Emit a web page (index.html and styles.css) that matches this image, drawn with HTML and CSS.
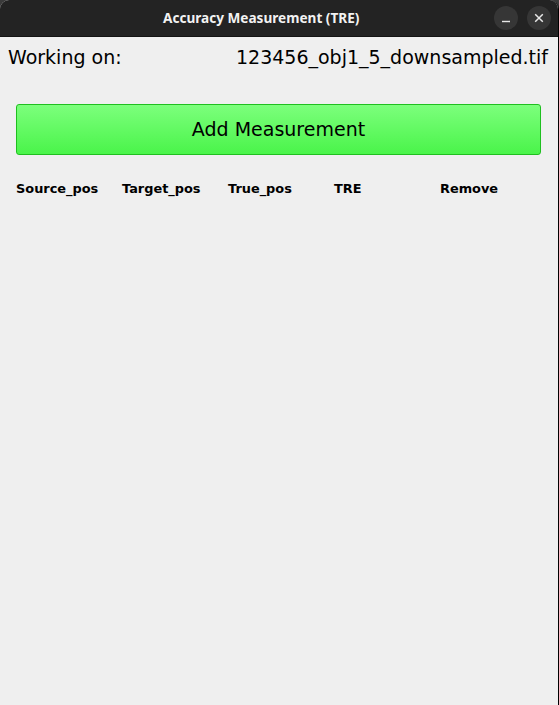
FILE: index.html
```html
<!DOCTYPE html>
<html>
<head>
<meta charset="utf-8">
<link rel="stylesheet" href="styles.css">
</head>
<body>
<div class="window">
  <div class="titlebar">
    <span class="title">Accuracy Measurement (TRE)</span>
    <div class="controls">
      <span class="ctl">
        <svg width="10" height="10" viewBox="0 0 10 10"><path d="M1 8.5h8" stroke="#e8e8e8" stroke-width="1.4"/></svg>
      </span>
      <span class="ctl">
        <svg width="10" height="10" viewBox="0 0 10 10"><path d="M1.2 1.2l7.6 7.6M8.8 1.2l-7.6 7.6" stroke="#e8e8e8" stroke-width="1.5"/></svg>
      </span>
    </div>
  </div>
  <div class="content">
    <div class="working">
      <span>Working on:</span>
      <span>123456_obj1_5_downsampled.tif</span>
    </div>
    <button class="add">Add Measurement</button>
    <div class="header">
      <span>Source_pos</span>
      <span>Target_pos</span>
      <span>True_pos</span>
      <span>TRE</span>
      <span>Remove</span>
    </div>
  </div>
</div>
</body>
</html>
```
FILE: styles.css
```css
html, body {
  margin: 0;
  padding: 0;
  height: 100%;
  background: #3a3a3a;
}
.window {
  width: 558px;
  height: 705px;
  border-right: 1px solid #000;
  display: flex;
  flex-direction: column;
  background: #efefef;
  border-radius: 9px 9px 0 0;
  overflow: hidden;
}
.titlebar {
  height: 36px;
  flex: none;
  background: #232323;
  border-bottom: 1px solid #141414;
  display: flex;
  align-items: center;
  position: relative;
}
.title {
  font-family: "Noto Sans", sans-serif;
  font-weight: bold;
  font-size: 13.6px;
  color: #f2f2f2;
  margin-left: 163px;
  padding-bottom: 1px;
}
.controls {
  position: absolute;
  right: 7px;
  top: 6px;
  display: flex;
  gap: 9px;
}
.ctl {
  width: 24px;
  height: 24px;
  border-radius: 50%;
  background: #363636;
  display: flex;
  align-items: center;
  justify-content: center;
}
.content {
  flex: 1;
  font-family: "DejaVu Sans", sans-serif;
  color: #000;
  padding: 0 10px 0 8px;
}
.working {
  display: flex;
  justify-content: space-between;
  font-size: 19px;
  line-height: 22px;
  padding-top: 9px;
}
.add {
  display: block;
  box-sizing: border-box;
  margin: 36px 8px 0 8px;
  width: 525px;
  height: 51px;
  border: 1px solid #1fbf1f;
  border-radius: 3px;
  background: linear-gradient(#7cff7c, #4af44a);
  font-family: "DejaVu Sans", sans-serif;
  font-size: 19px;
  color: #000;
  padding: 0 0 1px 0;
}
.header {
  display: grid;
  grid-template-columns: repeat(5, 106px);
  padding-left: 8px;
  margin-top: 26px;
  font-size: 12.9px;
  font-weight: bold;
  line-height: 16px;
}
```
